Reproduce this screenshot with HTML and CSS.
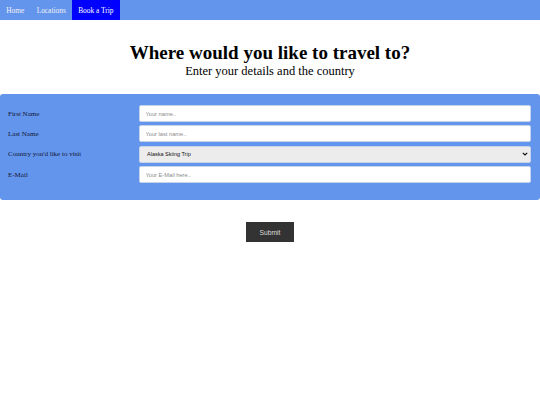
FILE: index.html
```html
<!DOCTYPE html>
<html lang="en">
<head>
<meta charset="utf-8">
<title>Book a Trip</title>
<link rel="stylesheet" href="styles.css">
</head>
<body>
<nav class="topnav">
  <a href="#" class="nav-link">Home</a>
  <a href="#" class="nav-link">Locations</a>
  <a href="#" class="nav-link active">Book a Trip</a>
</nav>
<header class="intro">
  <h1 class="title">Where would you like to travel to?</h1>
  <p class="subtitle">Enter your details and the country</p>
</header>
<form class="trip-form">
  <div class="panel">
    <label class="field-label" for="fname">First Name</label>
    <input class="field" id="fname" type="text" placeholder="Your name..">
    <label class="field-label" for="lname">Last Name</label>
    <input class="field" id="lname" type="text" placeholder="Your last name..">
    <label class="field-label" for="country">Country you'd like to visit</label>
    <div class="select-wrap">
      <select class="field select" id="country">
        <option>Alaska Skiing Trip</option>
      </select>
      <svg class="chevron" width="6" height="4" viewBox="0 0 6 4" aria-hidden="true"><path d="M0.8 0.8 L3 3 L5.2 0.8" fill="none" stroke="#111" stroke-width="1.2"/></svg>
    </div>
    <label class="field-label" for="email">E-Mail</label>
    <input class="field" id="email" type="text" placeholder="Your E-Mail here..">
  </div>
  <div class="actions">
    <button type="button" class="submit">Submit</button>
  </div>
</form>
</body>
</html>
```
FILE: styles.css
```css
html, body {
  margin: 0;
  padding: 0;
  background: #ffffff;
}
body {
  font-family: "Liberation Serif", "Times New Roman", serif;
  color: #000;
}
.topnav {
  display: flex;
  height: 20px;
  background: #6495ed;
}
.nav-link {
  display: flex;
  align-items: center;
  padding: 0 6.2px;
  font-size: 7.4px;
  color: #f2f2f2;
  text-decoration: none;
}
.nav-link.active {
  background: #0000ff;
  color: #ffffff;
}
.intro {
  text-align: center;
  padding-top: 22px;
}
.title {
  margin: 0;
  font-size: 19px;
  line-height: 22px;
  font-weight: bold;
}
.subtitle {
  margin: 0;
  font-size: 12.5px;
  line-height: 14px;
}
.trip-form {
  margin-top: 16px;
}
.panel {
  display: grid;
  grid-template-columns: 131px 1fr;
  row-gap: 3.4px;
  align-items: center;
  background: #6495ed;
  border-radius: 3px;
  padding: 11px 9px 17px 8px;
}
.field-label {
  font-size: 7px;
  color: #101733;
}
.field {
  box-sizing: border-box;
  width: 100%;
  height: 17px;
  margin: 0;
  padding: 0 5.5px;
  border: 1px solid #c8d3ea;
  border-radius: 2px;
  background: #ffffff;
  font-family: "Liberation Sans", Arial, sans-serif;
  font-size: 5.7px;
  color: #222;
  outline: none;
}
.field::placeholder {
  color: #8a8a8a;
}
.select-wrap {
  position: relative;
  display: flex;
}
.select {
  -webkit-appearance: none;
  appearance: none;
  background: #ececec;
  font-size: 5.5px;
  color: #111;
  padding-left: 7px;
}
.chevron {
  position: absolute;
  right: 3px;
  top: 6.5px;
  pointer-events: none;
}
.actions {
  display: flex;
  justify-content: center;
  margin-top: 22px;
}
.submit {
  width: 48px;
  height: 20px;
  border: none;
  border-radius: 0;
  background: #333333;
  color: #dddddd;
  font-family: "Liberation Sans", Arial, sans-serif;
  font-size: 6.7px;
  padding: 0;
}
```
